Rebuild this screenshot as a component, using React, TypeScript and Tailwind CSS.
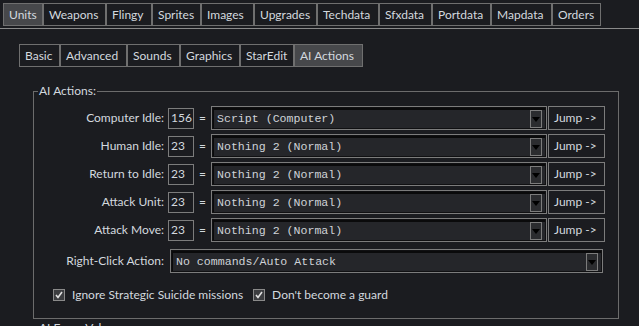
import React from "react";

const topTabs: [string, number][] = [
  ["Units", 40], ["Weapons", 63], ["Flingy", 46], ["Sprites", 49], ["Images", 53], ["Upgrades", 63],
  ["Techdata", 62], ["Sfxdata", 53], ["Portdata", 59], ["Mapdata", 61], ["Orders", 49],
];
const subTabs: [string, number][] = [
  ["Basic", 41], ["Advanced", 67], ["Sounds", 53], ["Graphics", 60], ["StarEdit", 54], ["AI Actions", 69],
];

const rows: [string, string, string][] = [
  ["Computer Idle:", "156", "Script (Computer)"],
  ["Human Idle:", "23", "Nothing 2 (Normal)"],
  ["Return to Idle:", "23", "Nothing 2 (Normal)"],
  ["Attack Unit:", "23", "Nothing 2 (Normal)"],
  ["Attack Move:", "23", "Nothing 2 (Normal)"],
];

function Arrow() {
  return (
    <div className="w-[12px] h-[18px] border border-[#7c7c7c] bg-[#2b2c2f] flex items-center justify-center">
      <svg width="8" height="5" viewBox="0 0 8 5"><path d="M0 0H8L4 5Z" fill="#000" /></svg>
    </div>
  );
}

function Dropdown({ text, w }: { text: string; w: string }) {
  return (
    <div className={`${w} h-[24px] border border-[#7c7c7c] p-px bg-[#101012]`}>
      <div className="h-full border-t-2 border-l border-[#0a0a0b] bg-[#25262a] flex items-center justify-between pl-[3px] pr-[3px]">
        <span className="text-[11.6px] text-[#cfd3d8]" style={{ fontFamily: '"Liberation Mono", monospace' }}>{text}</span>
        <Arrow />
      </div>
    </div>
  );
}

function Check({ label }: { label: string }) {
  return (
    <div className="flex items-center gap-[7px]">
      <div className="w-[12px] h-[12px] border border-[#8a8a8a] bg-[#3c3d40] flex items-center justify-center">
        <svg width="8" height="8" viewBox="0 0 8 8"><path d="M1 4L3 6.5L7 1" stroke="#e0e0e0" strokeWidth="1.6" fill="none" /></svg>
      </div>
      <span>{label}</span>
    </div>
  );
}

export default function App() {
  return (
    <div
      className="w-[639px] h-[326px] overflow-hidden bg-[#1b1c20] text-[#d3d9df] text-[12px] leading-none"
      style={{ fontFamily: '"Lato", "Noto Sans", sans-serif' }}
    >
      <div className="pt-[3px] pl-[3px] border-b border-[#8a8a8a] pb-[2px] flex">
        {topTabs.map(([t, w], i) => (
          <div
            key={t}
            className={`h-[23px] border border-[#6f6f6f] flex items-center pl-[5px] ${i === 0 ? "bg-[#47484b]" : ""}`}
            style={{ width: w }}
          >
            {t}
          </div>
        ))}
      </div>
      <div className="pl-[19px] pt-[15px] flex">
        {subTabs.map(([t, w], i) => (
          <div
            key={t}
            className={`h-[23px] border border-[#6f6f6f] flex items-center pl-[5px] ${i === subTabs.length - 1 ? "bg-[#47484b]" : ""}`}
            style={{ width: w }}
          >
            {t}
          </div>
        ))}
      </div>
      <div className="ml-[33px] mt-[24px] w-[586px] h-[228px] border border-[#6c6c6c] relative">
        <div className="absolute left-[4px] top-[-7px] bg-[#1b1c20] px-[1px]">AI Actions:</div>
        <div className="pt-[14px] flex flex-col gap-[4px]">
          {rows.map(([l, n, v]) => (
            <div key={l} className="flex items-center h-[24px]">
              <div className="w-[130px] text-right">{l}</div>
              <div className="ml-[4px] w-[26px] h-[21px] border border-[#7c7c7c] flex items-center pl-[2px] text-[12px]">{n}</div>
              <div className="w-[17px] text-center">=</div>
              <Dropdown text={v} w="w-[336px]" />
              <div className="ml-[1px] w-[57px] h-[24px] border border-[#7c7c7c] flex items-center pl-[5px]">Jump -&gt;</div>
            </div>
          ))}
          <div className="flex items-center h-[24px] mt-[3px]">
            <div className="w-[130px] text-right">Right-Click Action:</div>
            <div className="ml-[6px]"><Dropdown text="No commands/Auto Attack" w="w-[433px]" /></div>
          </div>
          <div className="flex items-center gap-[10px] pl-[19px] mt-[12px]">
            <Check label="Ignore Strategic Suicide missions" />
            <Check label="Don't become a guard" />
          </div>
        </div>
      </div>
      <div className="ml-[39px] mt-[3px]">AI Force Values</div>
    </div>
  );
}
